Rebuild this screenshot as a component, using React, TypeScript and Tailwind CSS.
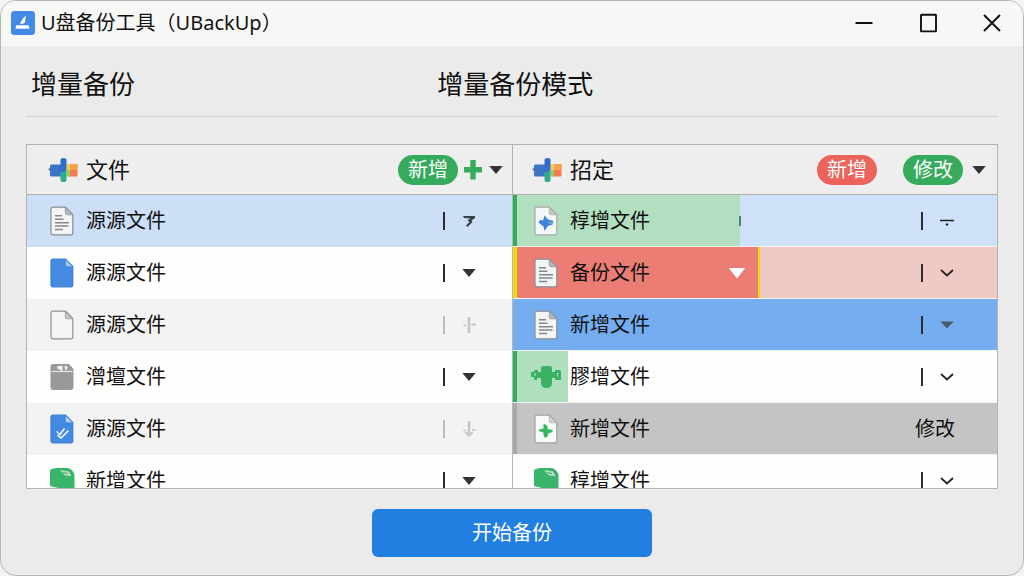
import type { ReactNode } from "react";

type IconName =
  | "lines"
  | "blue"
  | "blank"
  | "box"
  | "check"
  | "folder"
  | "bluestar"
  | "greenplus"
  | "connector";

type CaretName = "solid" | "chevron" | "broken" | "dash" | "plus" | "down" | "dim";

function Doc({
  fill = "#f3f4f4",
  stroke = "#8b8f93",
  fold = "#b4b8bc",
  children,
}: {
  fill?: string;
  stroke?: string;
  fold?: string;
  children?: ReactNode;
}) {
  return (
    <svg width="24" height="30" viewBox="0 0 24 30" aria-hidden="true">
      <path
        d="M3 1.2H15.5L22.8 8.6V26.8Q22.8 28.8 20.8 28.8H3Q1 28.8 1 26.8V3.2Q1 1.2 3 1.2Z"
        fill={fill}
        stroke={stroke}
        strokeWidth="1.2"
      />
      <path d="M15.3 1.4V7Q15.3 8.8 17.1 8.8H22.7Z" fill={fold} stroke={stroke} strokeWidth=".7" />
      {children}
    </svg>
  );
}

function FileIcon({ name }: { name: IconName }) {
  switch (name) {
    case "lines":
      return (
        <Doc>
          <path d="M5 9.8H12M5 13.2H13.5M5 16.8H19M5 20H18.5M5 23.5H13" stroke="#85888b" strokeWidth="1.4" />
        </Doc>
      );
    case "blue":
      return <Doc fill="#438ae0" stroke="#3a7fd6" fold="#a9c9f3" />;
    case "blank":
      return <Doc fill="#f4f4f4" stroke="#8f9193" fold="#c3c4c5" />;
    case "check":
      return (
        <Doc fill="#438be2" stroke="#3a7fd6" fold="#b9d3f5">
          <path d="M6.5 17.5L10 20.5L14.5 14.5M7.5 21L11 24L18.5 16.5" fill="none" stroke="#fff" strokeWidth="1.5" />
        </Doc>
      );
    case "bluestar":
      return (
        <Doc fill="#f5f8f8" stroke="#a3aaab" fold="#c0c6c8">
          <path d="M10.5 9.5L14 13.5L19.5 15L18.5 18.5L14 20L10.5 25L9.5 20.5L4.5 16.5L6 14L9 14.5Z" fill="#3c83dd" />
          <path d="M14.5 16.8H19.5" stroke="#8fc7a0" strokeWidth="1.2" />
        </Doc>
      );
    case "greenplus":
      return (
        <Doc fill="#f7faf8" stroke="#a0a4a2" fold="#cfd3d2">
          <path d="M9.5 9.5L13.5 12V15L18.5 16V18L14 19.5V22L11 24L9.5 21V18.5L5 17V15.5L9.5 14.5Z" fill="#33b75c" />
        </Doc>
      );
    case "box":
      return (
        <svg width="24" height="30" viewBox="0 0 24 30" aria-hidden="true">
          <path d="M3 2H19L23.5 7V25Q23.5 28 20.5 28H3Q.5 28 .5 25V4.5Q.5 2 3 2Z" fill="#999" />
          <path d="M1.5 9.5H22.5" stroke="#e8e8e8" strokeWidth="1.2" />
          <path d="M7 4.5L12.5 3.5V9L7.5 6.5ZM14.5 3.5L18 5L15.5 9Z" fill="#f5f5f5" />
        </svg>
      );
    case "folder":
      return (
        <svg width="26" height="30" viewBox="0 0 26 30" aria-hidden="true">
          <path
            d="M1 5Q1 3 3 3L7 2H19Q24 3.5 25.5 9V28H17L13 23L1 20Z"
            fill="#38b56b"
          />
          <path d="M11 4L20 5.5L22.5 10L16 9.5Z" fill="#b9e2c4" />
          <path d="M14 6.5L19 7.5" stroke="#4b9a68" strokeWidth="1" />
        </svg>
      );
    case "connector":
      return (
        <svg width="32" height="28" viewBox="0 0 32 28" aria-hidden="true">
          <path
            d="M11 5Q11 3 13 3H20Q22 3 22 5V9H25V7H29Q31 7 31 9V17H25V15H22V20Q22 25 16.5 25Q11 25 11 20V15H7V17H4V14H1V9H4V7H8V9H11Z"
            fill="#3bb163"
          />
          <path d="M5 10V13M27.5 10V13.5" stroke="#a5d9b4" strokeWidth="1.4" />
        </svg>
      );
  }
}

function BrandIcon() {
  return (
    <svg width="30" height="26" viewBox="0 0 30 26" aria-hidden="true">
      <path d="M0 12L3 10.5V15Z" fill="#7a6f80" />
      <rect x="2" y="7.5" width="13" height="12" rx="1.5" fill="#3f73c4" />
      <rect x="20" y="7" width="9.5" height="12.5" rx="1" fill="#f3794f" />
      <rect x="18.5" y="7" width="4" height="7" fill="#f4ce4a" />
      <rect x="22.5" y="7" width="7" height="6" fill="#f6a24b" />
      <rect x="18.5" y="13" width="3.5" height="6.5" fill="#8fd06c" />
      <path d="M12.5 3Q12.5 1 15.5 1Q18.5 1 18.5 3V13H12.5Z" fill="#2d6cc9" />
      <path d="M12.5 13H18.5V23Q18.5 25 15.5 25Q12.5 25 12.5 23Z" fill="#35a98b" />
      <path d="M10 9.5H17V15H10Z" fill="#3470cc" />
    </svg>
  );
}

function Caret({ name }: { name: CaretName }) {
  return (
    <svg width="16" height="18" viewBox="0 0 16 18" aria-hidden="true">
      {name === "solid" && <path d="M1.3 5H14.7L8 13Z" fill="#333" />}
      {name === "dim" && <path d="M1.3 5.5H14.7L8 12.5Z" fill="#505a66" />}
      {name === "chevron" && <path d="M2 6L8 11.5L14 6" fill="none" stroke="#222" strokeWidth="1.7" />}
      {name === "broken" && (
        <path d="M2 4H14V6L10.5 8.5L11.5 10L6.5 15L5 13.5L8.5 10L6.5 8.5L9.5 6.5L3 6Z" fill="#3a4048" />
      )}
      {name === "dash" && (
        <>
          <path d="M1 8.5H15" stroke="#222" strokeWidth="1.6" />
          <circle cx="8" cy="12.5" r="1.2" fill="#222" />
        </>
      )}
      {name === "plus" && (
        <g stroke="#c4c4c4" fill="none">
          <path d="M8 1V17" strokeWidth="2.6" />
          <path d="M2.5 9.5H5M10.5 8.5H15" strokeWidth="1.8" />
        </g>
      )}
      {name === "down" && (
        <g stroke="#c4c4c4" fill="none">
          <path d="M8 1V12" strokeWidth="2.4" />
          <path d="M2.5 10.5H5M11 10H14.5M5 13L8 16L11 13Z" strokeWidth="1.6" />
        </g>
      )}
    </svg>
  );
}

function RowActions({ caret, faint }: { caret: CaretName; faint?: boolean }) {
  return (
    <div className="ml-auto flex items-center gap-4">
      <span className={faint ? "h-[18px] w-0.5 bg-[#bdbdbd]" : "h-[18px] w-0.5 bg-[#2c2c2c]"} />
      <button type="button" aria-label="展开" className="flex">
        <Caret name={caret} />
      </button>
    </div>
  );
}

function Label({ icon, text }: { icon: IconName; text: string }) {
  return (
    <div className="flex shrink-0 items-center gap-2.5">
      <span className="flex w-7 justify-center">
        <FileIcon name={icon} />
      </span>
      <span className="whitespace-nowrap">{text}</span>
    </div>
  );
}

function Badge({ tone, children }: { tone: string; children: ReactNode }) {
  return (
    <button
      type="button"
      className={`flex h-[30px] w-[60px] items-center justify-center rounded-full text-xl text-white ${tone}`}
    >
      {children}
    </button>
  );
}

const leftRows: { icon: IconName; text: string; caret: CaretName; faint?: boolean; bg: string }[] = [
  { icon: "lines", text: "源源文件", caret: "broken", bg: "bg-[#cddff7]" },
  { icon: "blue", text: "源源文件", caret: "solid", bg: "bg-[#fefefd]" },
  { icon: "blank", text: "源源文件", caret: "plus", faint: true, bg: "bg-[#f3f3f3]" },
  { icon: "box", text: "潧壇文件", caret: "solid", bg: "bg-[#fefefd]" },
  { icon: "check", text: "源源文件", caret: "down", faint: true, bg: "bg-[#f3f3f3]" },
  { icon: "folder", text: "新增文件", caret: "solid", bg: "bg-[#fefefd]" },
];

const rightRows: { bg: string; content: ReactNode; actions: ReactNode }[] = [
  {
    bg: "bg-[#cfe1f9]",
    content: (
      <>
        <div className="flex h-full w-[227px] items-center border-l-4 border-[#2fae5a] bg-[#b3dfc1] pl-[15px]">
          <Label icon="bluestar" text="稕增文件" />
        </div>
        <span className="-ml-px h-2.5 w-0.5 bg-[#4c7f78]" />
      </>
    ),
    actions: <RowActions caret="dash" />,
  },
  {
    bg: "bg-[#efcac4]",
    content: (
      <div className="flex h-full w-[247px] items-center border-r-2 border-l-4 border-[#efd900] bg-[#ec7d74] pr-3 pl-[15px]">
        <Label icon="lines" text="备份文件" />
        <button type="button" aria-label="选择操作" className="ml-auto">
          <svg width="18" height="18" viewBox="0 0 18 18" aria-hidden="true">
            <path d="M.8 4H17.2L9 14.5Z" fill="#fff" />
          </svg>
        </button>
      </div>
    ),
    actions: <RowActions caret="chevron" />,
  },
  {
    bg: "bg-[#74aef0]",
    content: (
      <div className="pl-[19px]">
        <Label icon="lines" text="新增文件" />
      </div>
    ),
    actions: <RowActions caret="dim" />,
  },
  {
    bg: "bg-[#fefefe]",
    content: (
      <>
        <div className="flex h-full w-[55px] items-center justify-end border-l-4 border-[#2fae5a] bg-[#b0dfbe] pr-1.5">
          <FileIcon name="connector" />
        </div>
        <span className="ml-0.5 whitespace-nowrap">膠增文件</span>
      </>
    ),
    actions: <RowActions caret="chevron" />,
  },
  {
    bg: "bg-[#c4c4c4]",
    content: (
      <div className="flex h-full items-center border-l-4 border-[#a8a8a8] pl-[15px]">
        <Label icon="greenplus" text="新增文件" />
      </div>
    ),
    actions: (
      <button type="button" className="ml-auto text-xl">
        修改
      </button>
    ),
  },
  {
    bg: "bg-[#fefefe]",
    content: (
      <div className="pl-[19px]">
        <Label icon="folder" text="稕增文件" />
      </div>
    ),
    actions: <RowActions caret="chevron" />,
  },
];

export default function App() {
  return (
    <div className="h-screen bg-[#f4f4f4] font-['Noto_Sans','Noto_Sans_CJK_SC',sans-serif] text-[#111]">
      <div className="flex h-full flex-col overflow-hidden rounded-2xl border border-[#b5b5b5] bg-[#ebebeb]">
        <header className="flex h-[45px] shrink-0 items-center bg-[#f7f7f6] pr-[21px] pb-0.5 pl-2.5">
          <svg width="24" height="24" viewBox="0 0 24 24" aria-hidden="true">
            <rect width="24" height="24" rx="3.5" fill="#438ae6" />
            <path d="M5 14.2H17.5L18.5 17.8H4.5Z" fill="#fff" />
            <path d="M9 12.5L11.5 8L14.8 4.5L14 11.5L11.5 13Z" fill="#fff" />
          </svg>
          <span className="ml-1.5 text-xl whitespace-nowrap">U盘备份工具（UBackUp）</span>
          <div className="ml-auto flex items-center gap-[43px]">
            <button type="button" aria-label="最小化">
              <svg width="20" height="20" viewBox="0 0 20 20" aria-hidden="true">
                <path d="M1.5 10H18.5" stroke="#111" strokeWidth="1.9" />
              </svg>
            </button>
            <button type="button" aria-label="最大化">
              <svg width="22" height="20" viewBox="0 0 22 20" aria-hidden="true">
                <rect x="4" y="1.8" width="15" height="16.6" rx=".5" fill="none" stroke="#111" strokeWidth="1.9" />
              </svg>
            </button>
            <button type="button" aria-label="关闭">
              <svg width="20" height="20" viewBox="0 0 20 20" aria-hidden="true">
                <path d="M2 2L18 18M18 2L2 18" stroke="#111" strokeWidth="1.9" />
              </svg>
            </button>
          </div>
        </header>

        <main className="flex min-h-0 flex-1 flex-col px-[25px] pb-[18px]">
          <div className="flex h-[71px] shrink-0 items-center border-b border-[#d2d2d2] pt-1.5 pl-[5px] text-[26px]">
            <h1 className="w-[42%]">增量备份</h1>
            <h2>增量备份模式</h2>
          </div>

          <div className="mt-[27px] min-h-0 flex-1 overflow-hidden border border-[#b4b4b4]">
            <table className="w-full table-fixed border-separate border-spacing-0 text-xl">
              <thead>
                <tr className="bg-[#eee]">
                  <th scope="col" className="w-[50.1%] border-r border-b border-[#b0b0b0] p-0 font-normal">
                    <div className="flex h-[49px] items-center pr-2 pl-[21px]">
                      <BrandIcon />
                      <span className="ml-2 text-[22px]">文件</span>
                      <div className="ml-auto flex items-center gap-[5px]">
                        <Badge tone="bg-[#36ab5c]">新增</Badge>
                        <button type="button" aria-label="添加">
                          <svg width="20" height="22" viewBox="0 0 20 22" aria-hidden="true">
                            <path d="M7.3 1H12.7V8H19V13.5H12.7V20.5H7.3V13.5H1V8H7.3Z" fill="#36ab5c" />
                          </svg>
                        </button>
                        <button type="button" aria-label="更多">
                          <Caret name="solid" />
                        </button>
                      </div>
                    </div>
                  </th>
                  <th scope="col" className="border-b border-[#b0b0b0] p-0 font-normal">
                    <div className="flex h-[49px] items-center pr-2.5 pl-[19px]">
                      <BrandIcon />
                      <span className="ml-2 text-[22px]">招定</span>
                      <div className="ml-auto flex items-center">
                        <Badge tone="bg-[#eb635b]">新增</Badge>
                        <div className="ml-[26px] flex items-center gap-2">
                          <Badge tone="bg-[#36ab5c]">修改</Badge>
                          <button type="button" aria-label="更多">
                            <Caret name="solid" />
                          </button>
                        </div>
                      </div>
                    </div>
                  </th>
                </tr>
              </thead>
              <tbody>
                {leftRows.map((left, i) => (
                  <tr key={i}>
                    <td className={`border-r border-[#b8b8b8] p-0 ${left.bg}`}>
                      <div className="flex h-[52px] items-center pr-[35px] pl-[21px]">
                        <Label icon={left.icon} text={left.text} />
                        <RowActions caret={left.caret} faint={left.faint} />
                      </div>
                    </td>
                    <td className={`p-0 ${rightRows[i].bg}`}>
                      <div className="flex h-[52px] items-center border-b border-[#f4f4f4] pr-[42px]">
                        {rightRows[i].content}
                        {rightRows[i].actions}
                      </div>
                    </td>
                  </tr>
                ))}
              </tbody>
            </table>
          </div>

          <button
            type="button"
            className="mt-5 h-12 w-[280px] shrink-0 self-center rounded-md bg-[#207fe1] text-xl text-white"
          >
            开始备份
          </button>
        </main>
      </div>
    </div>
  );
}
